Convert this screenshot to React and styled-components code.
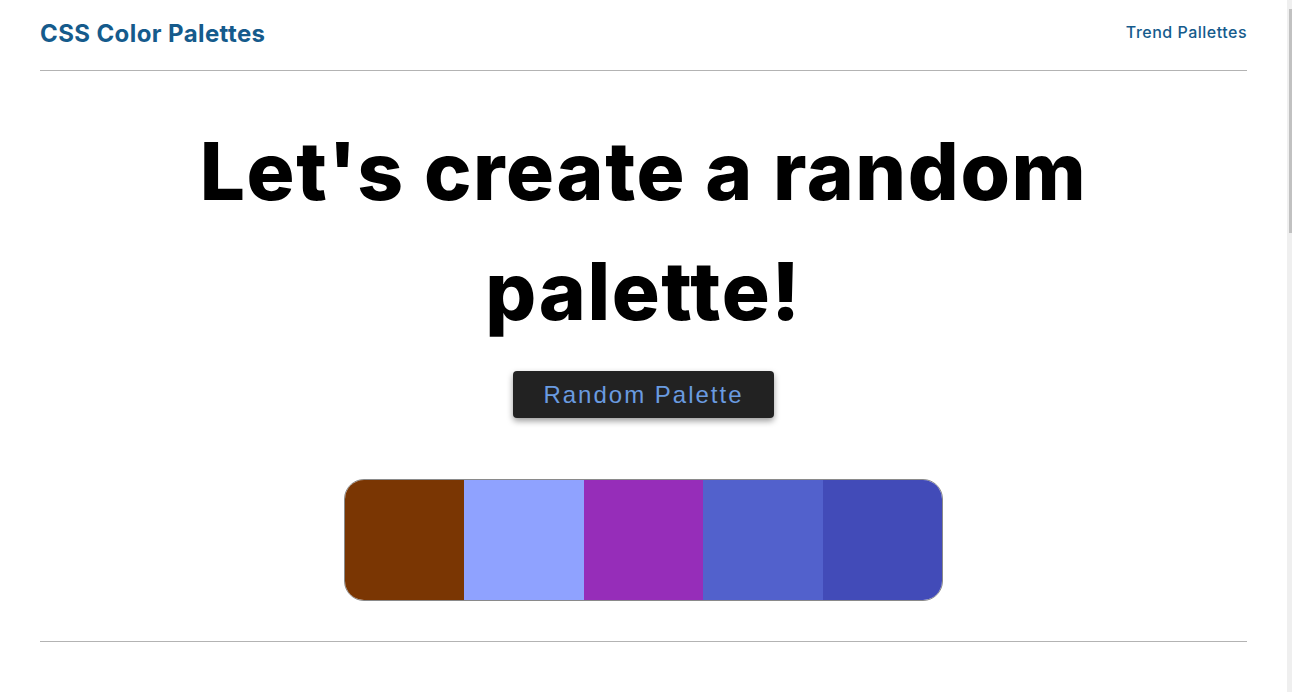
import React, { useState } from 'react';
import styled, { createGlobalStyle } from 'styled-components';

const GlobalStyle = createGlobalStyle`
  body {
    margin: 0;
    background: #fff;
    font-family: Inter, "Noto Sans", sans-serif;
  }
`;

const initialColors = ['#7a3603', '#8fa2ff', '#962db9', '#5261cc', '#424bb8'];

const randomHex = () =>
  '#' + Math.floor(Math.random() * 0xffffff).toString(16).padStart(6, '0');

const App = () => {
  const [colors, setColors] = useState(initialColors);

  return (
    <>
      <GlobalStyle />
      <Page>
        <Header>
          <Brand>CSS Color Palettes</Brand>
          <NavLink href="#">Trend Pallettes</NavLink>
        </Header>
        <Hero>
          <Title>Let's create a random palette!</Title>
          <Button onClick={() => setColors(colors.map(randomHex))}>
            Random Palette
          </Button>
          <Palette>
            {colors.map((c, i) => (
              <Swatch key={i} color={c} />
            ))}
          </Palette>
        </Hero>
      </Page>
      <ScrollTrack>
        <ScrollThumb />
      </ScrollTrack>
    </>
  );
};

const Page = styled.div`
  padding: 0 45px 0 40px;
`;

const Header = styled.header`
  display: flex;
  justify-content: space-between;
  align-items: center;
  height: 66px;
  border-bottom: 1px solid #b3b3b3;
  padding-bottom: 4px;
`;

const Brand = styled.h1`
  margin: 0;
  font-size: 24px;
  font-weight: 700;
  letter-spacing: 0.4px;
  color: #155b8c;
`;

const NavLink = styled.a`
  margin-bottom: 2px;
  font-size: 16px;
  font-weight: 500;
  letter-spacing: 0.5px;
  color: #155b8c;
  text-decoration: none;
`;

const Hero = styled.section`
  display: flex;
  flex-direction: column;
  align-items: center;
  padding: 40px 0 40px;
  border-bottom: 1px solid #b3b3b3;
`;

const Title = styled.h2`
  margin: 0;
  max-width: 960px;
  text-align: center;
  font-size: 80px;
  line-height: 120px;
  font-weight: 800;
  letter-spacing: 1.6px;
  color: #000;
`;

const Button = styled.button`
  margin-top: 20px;
  width: 261px;
  height: 47px;
  border: none;
  border-radius: 4px;
  background: #222;
  color: #6a9be0;
  font-family: "Liberation Sans", Arial, sans-serif;
  font-size: 24px;
  letter-spacing: 2px;
  box-shadow: 0 3px 6px rgba(0, 0, 0, 0.4);
  cursor: pointer;
`;

const Palette = styled.div`
  margin-top: 61px;
  display: flex;
  width: 597px;
  height: 120px;
  border: 1px solid #8a8a8a;
  border-radius: 20px;
  overflow: hidden;
`;

const Swatch = styled.div`
  flex: 1;
  background: ${p => p.color};
`;

const ScrollTrack = styled.div`
  position: fixed;
  top: 0;
  right: 0;
  width: 5px;
  height: 100vh;
  background: #efefef;
`;

const ScrollThumb = styled.div`
  margin: 9px 0 0 2px;
  width: 3px;
  height: 224px;
  background: #c1c1c1;
`;

export default App;
